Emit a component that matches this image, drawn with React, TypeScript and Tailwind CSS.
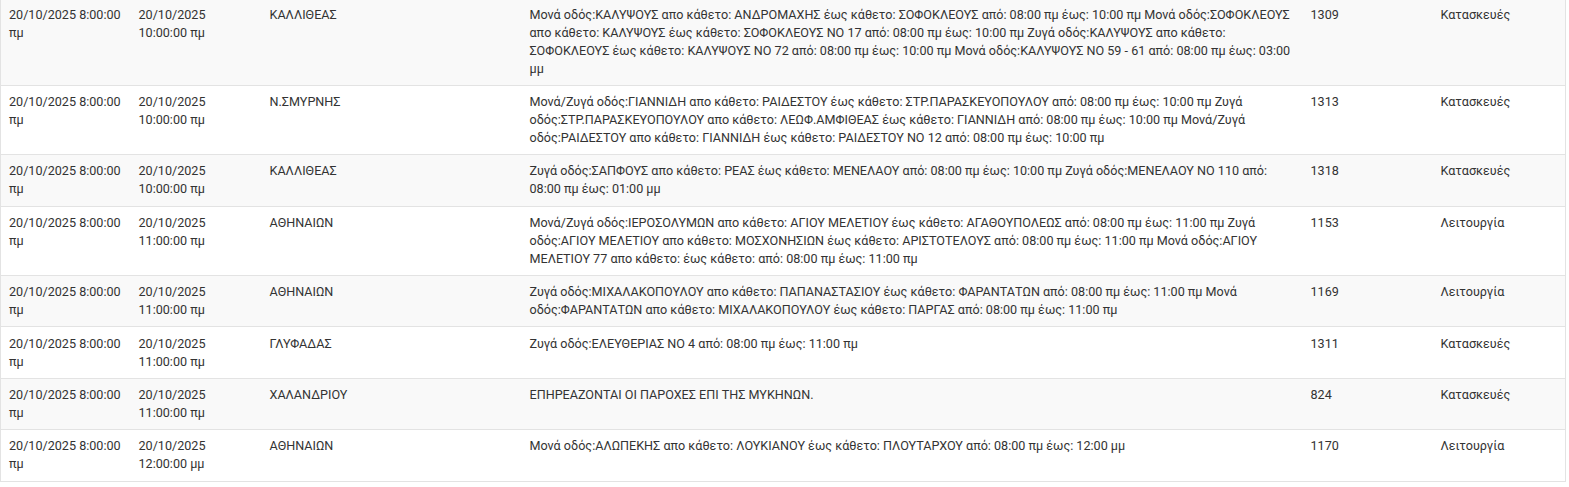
import React from "react";

type Row = [string, string, string, string, string, string];

const rows: Row[] = [
  [
    "20/10/2025 8:00:00 πμ",
    "20/10/2025 10:00:00 πμ",
    "ΚΑΛΛΙΘΕΑΣ",
    "Μονά οδός:ΚΑΛΥΨΟΥΣ απο κάθετο: ΑΝΔΡΟΜΑΧΗΣ έως κάθετο: ΣΟΦΟΚΛΕΟΥΣ από: 08:00 πμ έως: 10:00 πμ Μονά οδός:ΣΟΦΟΚΛΕΟΥΣ απο κάθετο: ΚΑΛΥΨΟΥΣ έως κάθετο: ΣΟΦΟΚΛΕΟΥΣ ΝΟ 17 από: 08:00 πμ έως: 10:00 πμ Ζυγά οδός:ΚΑΛΥΨΟΥΣ απο κάθετο: ΣΟΦΟΚΛΕΟΥΣ έως κάθετο: ΚΑΛΥΨΟΥΣ ΝΟ 72 από: 08:00 πμ έως: 10:00 πμ Μονά οδός:ΚΑΛΥΨΟΥΣ ΝΟ 59 - 61 από: 08:00 πμ έως: 03:00 μμ",
    "1309",
    "Κατασκευές",
  ],
  [
    "20/10/2025 8:00:00 πμ",
    "20/10/2025 10:00:00 πμ",
    "Ν.ΣΜΥΡΝΗΣ",
    "Μονά/Ζυγά οδός:ΓΙΑΝΝΙΔΗ απο κάθετο: ΡΑΙΔΕΣΤΟΥ έως κάθετο: ΣΤΡ.ΠΑΡΑΣΚΕΥΟΠΟΥΛΟΥ από: 08:00 πμ έως: 10:00 πμ Ζυγά οδός:ΣΤΡ.ΠΑΡΑΣΚΕΥΟΠΟΥΛΟΥ απο κάθετο: ΛΕΩΦ.ΑΜΦΙΘΕΑΣ έως κάθετο: ΓΙΑΝΝΙΔΗ από: 08:00 πμ έως: 10:00 πμ Μονά/Ζυγά οδός:ΡΑΙΔΕΣΤΟΥ απο κάθετο: ΓΙΑΝΝΙΔΗ έως κάθετο: ΡΑΙΔΕΣΤΟΥ ΝΟ 12 από: 08:00 πμ έως: 10:00 πμ",
    "1313",
    "Κατασκευές",
  ],
  [
    "20/10/2025 8:00:00 πμ",
    "20/10/2025 10:00:00 πμ",
    "ΚΑΛΛΙΘΕΑΣ",
    "Ζυγά οδός:ΣΑΠΦΟΥΣ απο κάθετο: ΡΕΑΣ έως κάθετο: ΜΕΝΕΛΑΟΥ από: 08:00 πμ έως: 10:00 πμ Ζυγά οδός:ΜΕΝΕΛΑΟΥ ΝΟ 110 από: 08:00 πμ έως: 01:00 μμ",
    "1318",
    "Κατασκευές",
  ],
  [
    "20/10/2025 8:00:00 πμ",
    "20/10/2025 11:00:00 πμ",
    "ΑΘΗΝΑΙΩΝ",
    "Μονά/Ζυγά οδός:ΙΕΡΟΣΟΛΥΜΩΝ απο κάθετο: ΑΓΙΟΥ ΜΕΛΕΤΙΟΥ έως κάθετο: ΑΓΑΘΟΥΠΟΛΕΩΣ από: 08:00 πμ έως: 11:00 πμ Ζυγά οδός:ΑΓΙΟΥ ΜΕΛΕΤΙΟΥ απο κάθετο: ΜΟΣΧΟΝΗΣΙΩΝ έως κάθετο: ΑΡΙΣΤΟΤΕΛΟΥΣ από: 08:00 πμ έως: 11:00 πμ Μονά οδός:ΑΓΙΟΥ ΜΕΛΕΤΙΟΥ 77 απο κάθετο: έως κάθετο: από: 08:00 πμ έως: 11:00 πμ",
    "1153",
    "Λειτουργία",
  ],
  [
    "20/10/2025 8:00:00 πμ",
    "20/10/2025 11:00:00 πμ",
    "ΑΘΗΝΑΙΩΝ",
    "Ζυγά οδός:ΜΙΧΑΛΑΚΟΠΟΥΛΟΥ απο κάθετο: ΠΑΠΑΝΑΣΤΑΣΙΟΥ έως κάθετο: ΦΑΡΑΝΤΑΤΩΝ από: 08:00 πμ έως: 11:00 πμ Μονά οδός:ΦΑΡΑΝΤΑΤΩΝ απο κάθετο: ΜΙΧΑΛΑΚΟΠΟΥΛΟΥ έως κάθετο: ΠΑΡΓΑΣ από: 08:00 πμ έως: 11:00 πμ",
    "1169",
    "Λειτουργία",
  ],
  [
    "20/10/2025 8:00:00 πμ",
    "20/10/2025 11:00:00 πμ",
    "ΓΛΥΦΑΔΑΣ",
    "Ζυγά οδός:ΕΛΕΥΘΕΡΙΑΣ ΝΟ 4 από: 08:00 πμ έως: 11:00 πμ",
    "1311",
    "Κατασκευές",
  ],
  [
    "20/10/2025 8:00:00 πμ",
    "20/10/2025 11:00:00 πμ",
    "ΧΑΛΑΝΔΡΙΟΥ",
    "ΕΠΗΡΕΑΖΟΝΤΑΙ ΟΙ ΠΑΡΟΧΕΣ ΕΠΙ ΤΗΣ ΜΥΚΗΝΩΝ.",
    "824",
    "Κατασκευές",
  ],
  [
    "20/10/2025 8:00:00 πμ",
    "20/10/2025 12:00:00 μμ",
    "ΑΘΗΝΑΙΩΝ",
    "Μονά οδός:ΑΛΩΠΕΚΗΣ απο κάθετο: ΛΟΥΚΙΑΝΟΥ έως κάθετο: ΠΛΟΥΤΑΡΧΟΥ από: 08:00 πμ έως: 12:00 μμ",
    "1170",
    "Λειτουργία",
  ],
];

export default function App() {
  return (
    <div className="h-[487px] w-[1569px] overflow-hidden bg-white">
      <div className="-mt-[2.5px] pr-[3px]">
        <table
          className="w-[1566px] table-fixed border-collapse border border-[#e3e3e3] text-[12.6px] leading-[18px] text-[#333]"
          style={{ fontFamily: "Roboto, 'Noto Sans', sans-serif" }}
        >
          <colgroup>
            <col className="w-[130px]" />
            <col className="w-[131px]" />
            <col className="w-[260px]" />
            <col className="w-[781px]" />
            <col className="w-[130px]" />
            <col />
          </colgroup>
          <tbody>
            {rows.map((r, i) => (
              <tr key={i} className={i % 2 === 0 ? "bg-[#f9f9f9]" : "bg-white"}>
                {r.map((c, j) => (
                  <td key={j} className="border-t border-[#e3e3e3] px-[8px] py-[7.2px] align-top">
                    {c}
                  </td>
                ))}
              </tr>
            ))}
          </tbody>
        </table>
      </div>
    </div>
  );
}
